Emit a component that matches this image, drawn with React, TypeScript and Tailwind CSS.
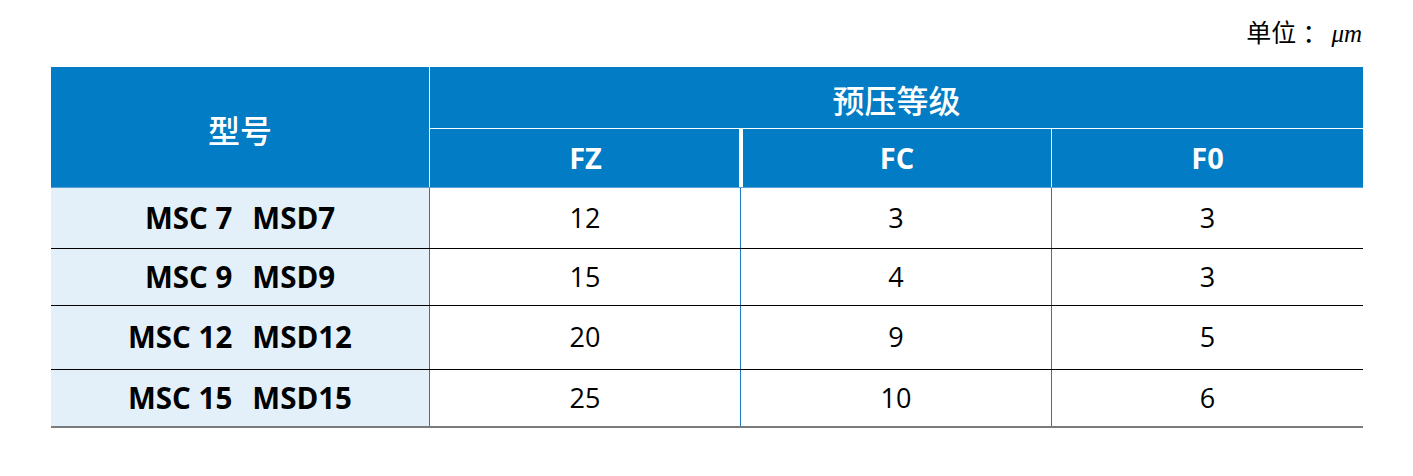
const rows = [
  { model: ["MSC 7", "MSD7"], fz: "12", fc: "3", f0: "3", h: "h-[60px]", line: "border-b border-black" },
  { model: ["MSC 9", "MSD9"], fz: "15", fc: "4", f0: "3", h: "h-[56px]", line: "border-b border-black" },
  { model: ["MSC 12", "MSD12"], fz: "20", fc: "9", f0: "5", h: "h-[63px]", line: "border-b border-black" },
  { model: ["MSC 15", "MSD15"], fz: "25", fc: "10", f0: "6", h: "h-[56px]", line: "border-b-2 border-[#7b7b7b]" },
];

const font = "font-['Open_Sans','Noto_Sans_CJK_SC',sans-serif]";

export default function App() {
  return (
    <div className={`w-[1413px] h-[476px] bg-white ${font}`}>
      <div className="flex justify-end pr-[51px] pt-[16px] h-[67px]">
        <span className="text-[25px] leading-[30px] text-black font-['Noto_Sans_CJK_SC',sans-serif] flex items-baseline">
          <span>单位</span>
          <span className="ml-[6px] mr-[4px]">：</span>
          <span className="font-['Liberation_Serif',serif] italic">μm</span>
        </span>
      </div>

      <div className="ml-[51px] w-[1312px]">
        {/* header */}
        <div className="grid grid-cols-[379px_933px] bg-[#027cc4] text-white border-b border-[#5a9fd6]">
          <div className="border-r border-white flex items-center justify-center text-[32px] font-medium font-['Noto_Sans_CJK_SC',sans-serif] pt-[4px]">
            型号
          </div>
          <div className="flex flex-col">
            <div className="h-[62px] border-b border-white flex items-center justify-center text-[32px] font-medium font-['Noto_Sans_CJK_SC',sans-serif] pt-[2px]">
              预压等级
            </div>
            <div className="h-[58px] grid grid-cols-[313px_309px_311px] text-[29px] font-bold">
              <div className="border-r-4 border-white flex items-center justify-center pl-[2px]">FZ</div>
              <div className="border-r border-white flex items-center justify-center">FC</div>
              <div className="flex items-center justify-center">F0</div>
            </div>
          </div>
        </div>

        {/* body */}
        {rows.map((r) => (
          <div key={r.model[0]} className={`grid grid-cols-[379px_311px_311px_311px] ${r.line}`}>
            <div className={`${r.h} bg-[#e3f0f9] border-r border-[#1b7bc2] flex items-center justify-center gap-[20px] text-[29.5px] font-bold text-black`}>
              <span>{r.model[0]}</span>
              <span>{r.model[1]}</span>
            </div>
            <div className="border-r border-[#1b7bc2] flex items-center justify-center text-[27px] text-black">{r.fz}</div>
            <div className="border-r border-[#1b7bc2] flex items-center justify-center text-[27px] text-black">{r.fc}</div>
            <div className="flex items-center justify-center text-[27px] text-black">{r.f0}</div>
          </div>
        ))}
      </div>
    </div>
  );
}
